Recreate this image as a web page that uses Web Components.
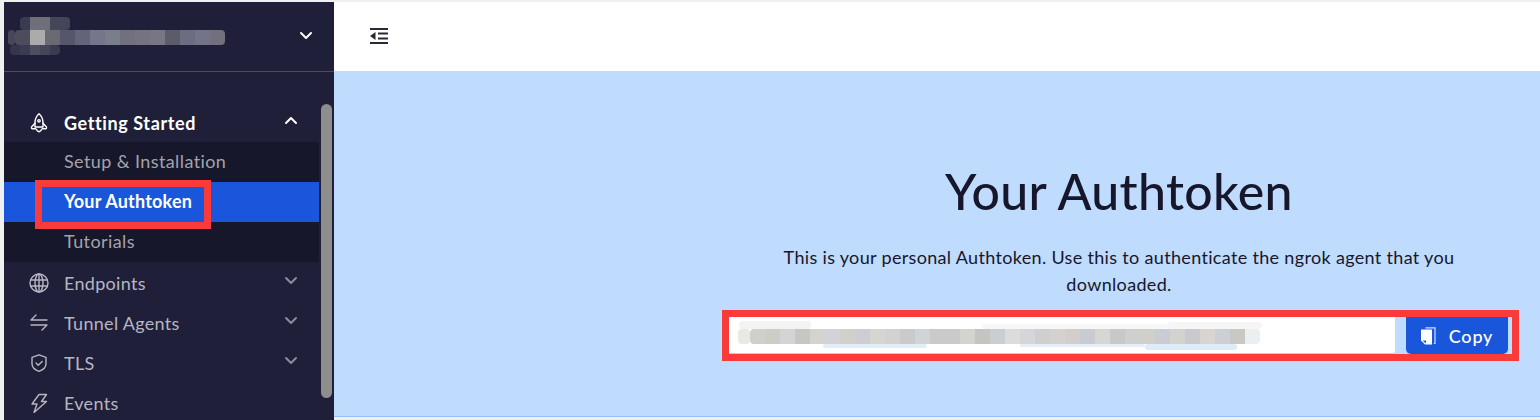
<!DOCTYPE html>
<html>
<head>
<meta charset="utf-8">
<style>
  html, body { margin: 0; height: 100%; overflow: hidden; background: #f0f0f0; }
  body { font-family: "Lato", "Liberation Sans", sans-serif; }
</style>
</head>
<body>
<app-shell>
  <app-sidebar slot="side">
    <nav-item label="Getting Started" icon="rocket" chevron="up" strong></nav-item>
    <nav-group>
      <nav-sub label="Setup &amp; Installation"></nav-sub>
      <nav-sub label="Your Authtoken" active></nav-sub>
      <nav-sub label="Tutorials"></nav-sub>
    </nav-group>
    <nav-item label="Endpoints" icon="globe" chevron="down"></nav-item>
    <nav-item label="Tunnel Agents" icon="arrows" chevron="down"></nav-item>
    <nav-item label="TLS" icon="shield" chevron="down"></nav-item>
    <nav-item label="Events" icon="bolt"></nav-item>
  </app-sidebar>
  <top-bar slot="top"></top-bar>
  <token-panel slot="main"></token-panel>
</app-shell>

<script>
const ICONS = {
  rocket: '<path d="M10 .8C7 3.500 6 6.800 6 9.600v4.400h8V9.600C14 6.800 13 3.500 10 .8z"/><circle cx="10" cy="7.800" r="1.200"/><path d="M6 10.200 2.700 13.800c-.5.6-.2 2 .7 2h3.300M14 10.200l3.300 3.600c.5.6.2 2-.7 2h-3.300M7.500 16.500c.5 1.200 1.500 2 2.500 2.200 1-.2 2-1 2.500-2.200"/>',
  globe: '<circle cx="10" cy="10" r="9"/><ellipse cx="10" cy="10" rx="4" ry="9"/><path d="M10 1v18M1.600 7h16.800M1.600 13h16.800"/>',
  arrows: '<path d="M7 2 2 7h16M18 12H2M18 12l-5 5"/>',
  shield: '<path d="M10 1.800 3 4.300v6.500c0 4 3.600 6.400 7 7.500 3.400-1.100 7-3.500 7-7.500V4.300z"/><path d="m7 10 2.200 2.200L13.200 8.400"/>',
  bolt: '<path d="M10 1.500h7.500l-5 7h5L5 19.500l3-8.500H3z"/>'
};
const chevron = dir => `<svg width="14" height="9" viewBox="0 0 14 9" fill="none" stroke="currentColor" stroke-width="2" stroke-linecap="round" stroke-linejoin="round"><path d="${dir == 'up' ? 'M2 7l5-5 5 5' : 'M2 2l5 5 5-5'}"/></svg>`;

// pixelated blur, as the secrets in the screenshot are hidden
class BlurMosaic extends HTMLElement {
  connectedCallback() {
    const size = this.getAttribute('size') || '15';
    const cells = (this.getAttribute('cells') || '').split(' ').filter(Boolean);
    this.attachShadow({mode: 'open'}).innerHTML = `
      <style>
        :host { display: flex; overflow: hidden; border-radius: 4px; }
        i { display: block; width: ${size}px; height: 100%; }
      </style>
      ${cells.map(c => `<i style="background:${c}"></i>`).join('')}`;
  }
}
customElements.define('blur-mosaic', BlurMosaic);

class AppShell extends HTMLElement {
  constructor() {
    super();
    this.attachShadow({mode: 'open'}).innerHTML = `
      <style>
        :host { display: grid; grid-template-columns: 330px 1fr; grid-template-rows: 69px 345px; margin: 2px 0 0 4px; position: relative; }
        ::slotted([slot=side]) { grid-row: 1 / span 3; }
        .foot { grid-column: 2; height: 1px; background: #93c0fb; }
      </style>
      <slot name="side"></slot>
      <slot name="top"></slot>
      <slot name="main"></slot>
      <div class="foot"></div>`;
  }
}
customElements.define('app-shell', AppShell);

class AppSidebar extends HTMLElement {
  constructor() {
    super();
    this.attachShadow({mode: 'open'}).innerHTML = `
      <style>
        :host { display: block; height: 418px; background: #1f1f39; position: relative; overflow: hidden; }
        .head { height: 70px; box-sizing: border-box; border-bottom: 1px solid #4b4b62; display: flex; align-items: center; justify-content: space-between; padding-right: 21px; color: #fff; position: relative; }
        .head svg { margin-top: -3px; }
        .nav { padding: 31px 15px 0 0; }
        .thumb { position: absolute; left: 317px; top: 102px; width: 11px; height: 294px; border-radius: 6px; background: #8e8e8e; }
        blur-mosaic { position: absolute; }
        .m1 { left: 11px; top: 28px; height: 15px; }
        .m2 { left: 16px; top: 15px; height: 13px; }
        .m3 { left: 6px; top: 43px; height: 10px; }
        .m4 { left: 4px; top: 28px; height: 15px; }
      </style>
      <div class="head">
        <blur-mosaic class="m2" size="10" cells="#3a3a52 #6f6f7a #6f6f7a #45455a #45455a"></blur-mosaic>
        <blur-mosaic class="m4" size="7" cells="#47475a"></blur-mosaic>
        <blur-mosaic class="m1" size="15" cells="#4c4c5c #ababab #6a6a72 #55556b #62647a #74778a #7a7d8c #72707f #76727f #787684 #5c5b6b #6b6d80 #72748a #736f7c"></blur-mosaic>
        <blur-mosaic class="m3" size="10" cells="#35354e #3a3a52 #4e4e5e #45455a #3a3a50"></blur-mosaic>
        <span></span>${chevron('down')}
      </div>
      <div class="nav"><slot></slot></div>
      <div class="thumb"></div>`;
  }
}
customElements.define('app-sidebar', AppSidebar);

class NavItem extends HTMLElement {
  connectedCallback() {
    const icon = ICONS[this.getAttribute('icon')];
    const chev = this.getAttribute('chevron');
    const strong = this.hasAttribute('strong');
    this.attachShadow({mode: 'open'}).innerHTML = `
      <style>
        :host { display: flex; align-items: center; height: 40px; padding: 0 21px 0 25px; color: ${strong ? '#fff' : '#b6b6c2'}; font-size: 18px; font-weight: ${strong ? 700 : 400}; letter-spacing: ${strong ? '.6px' : '.3px'}; }
        svg.ico { width: 20px; height: 20px; flex: none; }
        .t { margin-left: 15px; flex: 1; white-space: nowrap; }
        .c { display: flex; color: ${strong ? '#fff' : '#8c8c9c'}; margin-top: -5px; }
      </style>
      <svg class="ico" viewBox="0 0 20 20" fill="none" stroke="currentColor" stroke-width="1.400" stroke-linecap="round" stroke-linejoin="round">${icon}</svg>
      <span class="t">${this.getAttribute('label')}</span>
      ${chev ? `<span class="c">${chevron(chev)}</span>` : ''}`;
  }
}
customElements.define('nav-item', NavItem);

class NavGroup extends HTMLElement {
  constructor() {
    super();
    this.attachShadow({mode: 'open'}).innerHTML = `
      <style>:host { display: block; background: #17172b; height: 120px; margin-top: -1px; margin-bottom: 1px; }</style>
      <slot></slot>`;
  }
}
customElements.define('nav-group', NavGroup);

class NavSub extends HTMLElement {
  connectedCallback() {
    const active = this.hasAttribute('active');
    this.attachShadow({mode: 'open'}).innerHTML = `
      <style>
        :host { display: flex; align-items: center; height: 40px; padding-left: 60px; position: relative; font-size: 18px; white-space: nowrap; color: #a3a3ad; letter-spacing: .4px; }
        :host([active]) { background: #1a56db; color: #fff; font-weight: 700; letter-spacing: .2px; }
        span { margin-top: -3px; }
        .mark { position: absolute; left: 31px; top: -2px; width: 162px; height: 35px; border: 7px solid #fb3a3a; }
      </style>
      <span>${this.getAttribute('label')}</span>
      ${active ? '<div class="mark"></div>' : ''}`;
  }
}
customElements.define('nav-sub', NavSub);

class TopBar extends HTMLElement {
  constructor() {
    super();
    this.attachShadow({mode: 'open'}).innerHTML = `
      <style>
        :host { display: flex; align-items: center; background: #fff; padding: 0 0 2px 35px; }
      </style>
      <svg width="20" height="18" viewBox="0 0 20 18" fill="#2a2a36"><path d="M1 1h18v2H1zM9 5.500h10v2H9zM9 10.500h10v2H9zM1 15h18v2H1zM6.500 5v8L1 9z"/></svg>`;
  }
}
customElements.define('top-bar', TopBar);

class TokenPanel extends HTMLElement {
  constructor() {
    super();
    this.attachShadow({mode: 'open'}).innerHTML = `
      <style>
        :host { display: block; background: #bfdbfe; padding: 90px 0 0 395px; color: #17172b; }
        .box { width: 780px; text-align: center; }
        h1 { margin: 0; font-size: 50px; line-height: 60px; font-weight: 500; letter-spacing: .35px; }
        p { margin: 23px 0 0; padding: 0 30px; font-size: 18px; line-height: 27px; letter-spacing: .33px; }
        .row { display: flex; margin-top: 19px; height: 37px; position: relative; }
        .input { width: 666px; height: 36px; background: #fff; border-bottom: 1px solid #c8ccd4; border-radius: 0 0 3px 0; position: relative; overflow: hidden; }
        .input blur-mosaic { position: absolute; }
        .btn { margin-left: 11px; width: 102px; background: #1a56db; color: #fff; border-radius: 0 0 5px 5px; display: flex; align-items: center; justify-content: center; gap: 13px; font-size: 18px; font-weight: 500; letter-spacing: .8px; }
        .mark { position: absolute; left: -7px; top: -7px; width: 783px; height: 37px; border: 7px solid #fb3a3a; }
      </style>
      <div class="box">
        <h1>Your Authtoken</h1>
        <p>This is your personal Authtoken. Use this to authenticate the ngrok agent that you downloaded.</p>
        <div class="row">
          <div class="input">
            <blur-mosaic size="72" style="left:10px;top:4px;height:8px" cells="#f3f3f3"></blur-mosaic>
            <blur-mosaic size="185" style="left:253px;top:7px;height:5px" cells="#f7f7f7"></blur-mosaic>
            <blur-mosaic size="95" style="left:438px;top:5px;height:7px" cells="#f6f6f6"></blur-mosaic>
            <blur-mosaic size="12" style="left:9px;top:12px;height:15px" cells="#e8e8e4"></blur-mosaic>
            <blur-mosaic size="15" style="left:21px;top:12px;height:15px" cells="#cfcfcc #cdcdc8 #d3d4d6 #c6c6c4 #d4d3cf #d2d3d6 #d2d0cc #ccced2 #d5d5d2 #d2d2d2 #cacacc #d0d4d6 #cacac8 #c9cacc #d4d3ce #c6c4c0 #c9ced2 #dcdcdc #d6d6da #cfcfcf #d4d2ce #d2cecd #c8ccd0 #d6d6d4 #c8c8c8 #cfcfcf #d0cfcb #c9ccd0 #d2d2cf #c9c9ce #d8d4d0 #ccd0d4 #c9c8c4 #ebeff2"></blur-mosaic>
            <blur-mosaic size="104" style="left:94px;top:27px;height:4px" cells="#e3edf8"></blur-mosaic>
            <blur-mosaic size="125" style="left:291px;top:27px;height:3px" cells="#e6eef8"></blur-mosaic>
            <blur-mosaic size="92" style="left:416px;top:27px;height:6px" cells="#e0ebf8"></blur-mosaic>
          </div>
          <div class="btn">
            <svg width="15" height="18" viewBox="0 0 15 18"><path d="M4.500.8h9.500v15.700h-1.200" fill="none" stroke="#cfe0fb" stroke-width="1.200"/><path d="M0 2.500h11V17.500H4L0 13.500z" fill="#fff"/><path d="M1.500 13.500h3.500v3z" fill="#1a56db"/></svg>
            <span>Copy</span>
          </div>
          <div class="mark"></div>
        </div>
      </div>`;
  }
}
customElements.define('token-panel', TokenPanel);
</script>
</body>
</html>
